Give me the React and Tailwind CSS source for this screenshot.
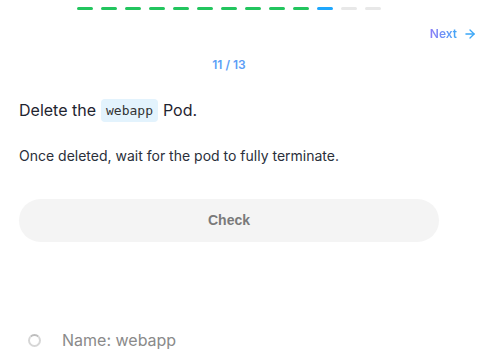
import { ArrowRight } from "lucide-react";

const steps = Array.from({ length: 13 }, (_, i) => i);

function Progress({ current }) {
  return (
    <div className="flex justify-center gap-2 pt-[7px]">
      {steps.map((i) => (
        <span
          key={i}
          className={`h-[3px] w-4 rounded-full ${
            i < current ? "bg-[#22c55e]" : i === current ? "bg-[#1ea7fd]" : "bg-[#e8e8e8]"
          }`}
        />
      ))}
    </div>
  );
}

export default function App() {
  return (
    <div className="relative h-[359px] w-[487px] overflow-hidden bg-white font-['Inter',sans-serif]">
      <div className="ml-[19px] w-[420px]">
        <Progress current={10} />
      </div>

      {/* Next */}
      <div className="mt-[16px] flex justify-end pr-[10px]">
        <button className="flex items-center gap-[6px] text-xs font-semibold leading-4">
          <span className="bg-gradient-to-r from-[#8b7cf6] to-[#3ba7f7] bg-clip-text text-transparent">Next</span>
          <ArrowRight size={14} strokeWidth={2.25} className="text-[#3ba7f7]" />
        </button>
      </div>

      <div className="ml-[19px] w-[420px]">
        <p className="mt-[15px] text-center text-xs font-semibold leading-4 text-[#5c9ef6]">11 / 13</p>

        <h2 className="mt-[25px] flex items-center text-base leading-6 text-[#1f2430]">
          Delete the
          <code className="mx-[5px] rounded bg-[#e3f3fd] px-[5px] py-[2px] font-['DejaVu_Sans_Mono',monospace] text-[13px] leading-[19px] text-[#333]">
            webapp
          </code>
          Pod.
        </h2>

        <p className="mt-[24px] text-sm leading-5 text-[#2a2f3a]">
          Once deleted, wait for the pod to fully terminate.
        </p>

        <button className="mt-[33px] flex h-[43px] w-full items-center justify-center rounded-full bg-[#f4f4f4] font-['Liberation_Sans',sans-serif] text-[14px] font-bold text-[#7a7a7a]">
          Check
        </button>

        <div className="mt-[86px] flex items-center gap-[21px] pl-[9px]">
          <span className="h-[13px] w-[13px] rounded-full border-2 border-[#d6d6d6] border-t-[#bdbdbd]" />
          <span className="text-base text-[#8a8a8a]">Name: webapp</span>
        </div>
      </div>
    </div>
  );
}
